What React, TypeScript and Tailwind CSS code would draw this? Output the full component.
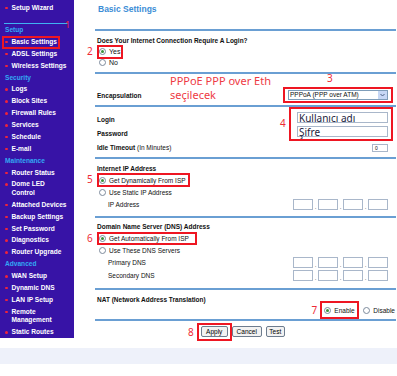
import React from 'react';

const menu: (string | { h: string } | { box: string })[] = [
  { h: 'Setup' },
  { box: 'Basic Settings' },
  'ADSL Settings',
  'Wireless Settings',
  { h: 'Security' },
  'Logs',
  'Block Sites',
  'Firewall Rules',
  'Services',
  'Schedule',
  'E-mail',
  { h: 'Maintenance' },
  'Router Status',
  'Dome LED\nControl',
  'Attached Devices',
  'Backup Settings',
  'Set Password',
  'Diagnostics',
  'Router Upgrade',
  { h: 'Advanced' },
  'WAN Setup',
  'Dynamic DNS',
  'LAN IP Setup',
  'Remote\nManagement',
  'Static Routes',
];

function Bullet() {
  return <span className="mt-[3px] mr-[4px] h-[2.5px] w-[2.5px] shrink-0 rounded-full bg-[#f0243a]" />;
}

function SideItem({ label }: { label: string }) {
  return (
    <div className="flex py-[1.7px] pl-[5px] text-[6.6px] font-bold leading-[8.5px] text-white">
      <Bullet />
      <span className="whitespace-pre">{label}</span>
    </div>
  );
}

function Sidebar() {
  return (
    <div className="relative h-[338px] w-[74px] shrink-0 bg-[#3713a6] pt-[2px]">
      <SideItem label="Setup Wizard" />
      <div className="mt-[9px] ml-[4px] h-[1.5px] w-[64px] bg-[#3fb2f2]" />
      <span className="absolute left-[65px] top-[20px] text-[9px] leading-[10px] text-[#f0243a] font-['Noto_Sans',sans-serif]">1</span>
      {menu.map((m, i) => {
        if (typeof m === 'string') return <SideItem key={i} label={m} />;
        if ('h' in m)
          return (
            <div key={i} className="py-[1.7px] pl-[5px] text-[6.6px] font-bold leading-[8.5px] text-[#33a8f4]">
              {m.h}
            </div>
          );
        return (
          <div key={i} className="-my-[0.5px] ml-[2px] flex h-[12.9px] w-fit items-center whitespace-nowrap border-2 border-[#ee1622] pl-[1px] pr-[1px] text-[6.6px] font-bold leading-[8.5px] text-white">
            <span className="mr-[4px] h-[2.5px] w-[2.5px] shrink-0 rounded-full bg-[#f0243a]" />
            {m.box}
          </div>
        );
      })}
    </div>
  );
}

function Radio({ on }: { on?: boolean }) {
  return (
    <span className="inline-flex h-[7px] w-[7px] shrink-0 items-center justify-center rounded-full border border-[#7c8a9c] bg-white">
      {on && <span className="h-[3px] w-[3px] rounded-full bg-[#3b8f3b]" />}
    </span>
  );
}

function Line() {
  return <div className="h-[2px] bg-[#6a9fd3]" />;
}

function IpBoxes() {
  return (
    <div className="flex items-end">
      {[0, 1, 2, 3].map((i) => (
        <div key={i} className="flex items-end">
          {i > 0 && <span className="w-[5px] text-center text-[6px] leading-[5px]">.</span>}
          <span className="h-[11px] w-[20px] border border-[#a9b7ca] bg-white" />
        </div>
      ))}
    </div>
  );
}

function Num({ n, className }: { n: string; className: string }) {
  return (
    <span className={`absolute text-[10px] leading-[12px] text-[#ee2a36] font-['Noto_Sans',sans-serif] ${className}`}>
      {n}
    </span>
  );
}

function Btn({ label, w }: { label: string; w: string }) {
  return (
    <span className={`flex h-[11px] items-center justify-center rounded-[2px] border border-[#6d7c8e] bg-[#f2f2f2] text-[6.5px] leading-[9px] text-black ${w}`}>
      {label}
    </span>
  );
}

function Main() {
  return (
    <div className="flex w-[323px] flex-col pl-[21px] pr-[1px] text-[6.5px] leading-[9px] text-[#111]">
      <div className="h-[29px] pt-[4px] pl-[3px] text-[8.5px] font-bold leading-[10px] text-[#3b8dd6]">Basic Settings</div>
      <Line />

      <div className="flex h-[41px] flex-col pt-[4px]">
        <div className="flex h-[11px] items-center pl-[2px] font-bold">Does Your Internet Connection Require A Login?</div>
        <div className="relative flex h-[11px] items-center pl-[2px]">
          <Num n="2" className="-left-[8px] top-[-1px]" />
          <span className="flex h-[14px] w-[26px] shrink-0 items-center gap-[3px] border-2 border-[#ee1622]">
            <Radio on />
            <span className="text-[7px]">Yes</span>
          </span>
        </div>
        <div className="flex h-[11px] items-center gap-[3px] pl-[4px]">
          <Radio />
          <span className="text-[7px]">No</span>
        </div>
      </div>
      <Line />

      <div className="relative h-[31px] pt-[13px] pb-[2px]">
        <span className="absolute left-[75px] top-[0px] text-[11px] leading-[13.5px] text-[#ee3a44] font-['Noto_Sans',sans-serif]">
          PPPoE PPP over Eth
          <br />
          seçilecek
        </span>
        <Num n="3" className="left-[232px] -top-[2px]" />
        <div className="flex h-[16px] items-center justify-between">
          <span className="pl-[2px] font-bold">Encapsulation</span>
          <span className="mr-[3px] flex h-[16px] w-[110px] items-center border-2 border-[#ee1622] px-[3px]">
            <span className="flex h-[10px] w-full items-stretch border border-[#7f9db9] bg-white">
              <span className="flex-1 pl-[1px] text-[6.5px] leading-[8px]">PPPoA (PPP over ATM)</span>
              <span className="flex w-[9px] items-center justify-center bg-[#c7d7f5]">
                <svg width="5" height="4" viewBox="0 0 5 4">
                  <path d="M0.5 1 L2.5 3 L4.5 1" fill="none" stroke="#4d6185" strokeWidth="1" />
                </svg>
              </span>
            </span>
          </span>
        </div>
      </div>
      <Line />

      <div className="flex h-[50px] justify-between">
        <div className="flex flex-col pt-[5px] pl-[2px]">
          <div className="flex h-[14px] items-center font-bold">Login</div>
          <div className="flex h-[14px] items-center font-bold">Password</div>
          <div className="flex h-[14px] items-center">
            <span className="font-bold">Idle Timeout</span>&nbsp;(In Minutes)
          </div>
        </div>
        <div className="flex flex-col items-end pr-[3px]">
          <div className="relative flex h-[34px] w-[104px] flex-col gap-[3px] border-2 border-[#ee1622] pt-[3px] pl-[6px] pr-[3px]">
            <Num n="4" className="-left-[11px] top-[8px]" />
            <span className="h-[11px] border border-[#a9b7ca] bg-white pl-[1px] text-[10px] leading-[10px] text-[#1b1b3c] font-['Noto_Sans',sans-serif]">Kullanıcı adı</span>
            <span className="h-[11px] border border-[#a9b7ca] bg-white pl-[1px] text-[10px] leading-[10px] text-[#1b1b3c] font-['Noto_Sans',sans-serif]">Şifre</span>
          </div>
          <span className="mt-[3px] mr-[5px] flex h-[8px] w-[16px] items-center border border-[#a9b7ca] bg-white pl-[2px] text-[5px] leading-[6px]">0</span>
        </div>
      </div>
      <Line />

      <div className="flex h-[57px] flex-col pt-[4px]">
        <div className="flex h-[11px] items-center pl-[2px] font-bold">Internet IP Address</div>
        <div className="relative flex h-[12px] items-center pl-[2px]">
          <Num n="5" className="-left-[8px] top-[-1px]" />
          <span className="flex h-[14px] w-[93px] shrink-0 items-center gap-[3px] border-2 border-[#ee1622]">
            <Radio on />
            <span>Get Dynamically From ISP</span>
          </span>
        </div>
        <div className="flex h-[12px] items-center gap-[3px] pl-[4px]">
          <Radio />
          <span>Use Static IP Address</span>
        </div>
        <div className="flex h-[12px] items-center justify-between pl-[13px] pr-[8px]">
          <span>IP Address</span>
          <IpBoxes />
        </div>
      </div>
      <Line />

      <div className="flex h-[70px] flex-col pt-[2px]">
        <div className="flex h-[12px] items-center pl-[2px] font-bold">Domain Name Server (DNS) Address</div>
        <div className="relative flex h-[12px] items-center pl-[2px]">
          <Num n="6" className="-left-[8px] top-[0px]" />
          <span className="flex h-[13px] w-[100px] shrink-0 items-center gap-[3px] border-2 border-[#ee1622]">
            <Radio on />
            <span>Get Automatically From ISP</span>
          </span>
        </div>
        <div className="flex h-[12px] items-center gap-[3px] pl-[4px]">
          <Radio />
          <span>Use These DNS Servers</span>
        </div>
        <div className="flex h-[13px] items-center justify-between pl-[13px] pr-[8px]">
          <span>Primary DNS</span>
          <IpBoxes />
        </div>
        <div className="flex h-[13px] items-center justify-between pl-[13px] pr-[8px]">
          <span>Secondary DNS</span>
          <IpBoxes />
        </div>
      </div>
      <Line />

      <div className="flex h-[29px] justify-between">
        <div className="flex h-[10px] items-center self-start mt-[4px] pl-[2px] font-bold">NAT (Network Address Translation)</div>
        <div className="flex items-center self-end pr-[1px]">
          <span className="mr-[3px] text-[10px] leading-[12px] text-[#ee2a36] font-['Noto_Sans',sans-serif]">7</span>
          <span className="flex h-[18px] w-[39px] items-center gap-[3px] border-2 border-[#ee1622] pl-[2px]">
            <Radio on />
            <span>Enable</span>
          </span>
          <span className="ml-[4px] flex items-center gap-[3px]">
            <Radio />
            <span>Disable</span>
          </span>
        </div>
      </div>
      <Line />

      <div className="flex h-[21px] items-center pl-[93px]">
        <span className="mr-[3px] text-[10px] leading-[12px] text-[#ee2a36] font-['Noto_Sans',sans-serif]">8</span>
        <span className="flex h-[18px] items-center border-2 border-[#ee1622] px-[2px]">
          <Btn label="Apply" w="w-[27px]" />
        </span>
        <Btn label="Cancel" w="w-[30px]" />
        <span className="ml-[4px]">
          <Btn label="Test" w="w-[19px]" />
        </span>
      </div>
    </div>
  );
}

export default function App() {
  return (
    <div className="h-[376px] w-[397px] overflow-hidden bg-white font-['Liberation_Sans',Arial,sans-serif]">
      <div className="flex h-[342px] items-start">
        <Sidebar />
        <Main />
      </div>
      <div className="mt-[6px] h-[16px] bg-[#eef1fa]" />
    </div>
  );
}
